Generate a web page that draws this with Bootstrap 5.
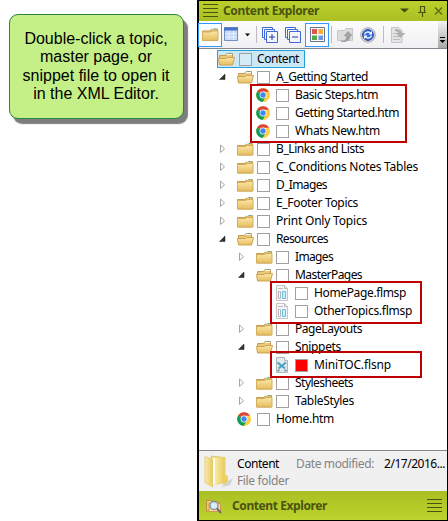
<!DOCTYPE html>
<html lang="en">
<head>
<meta charset="utf-8">
<title>Content Explorer</title>
<link href="https://cdn.jsdelivr.net/npm/bootstrap@5.3.0/dist/css/bootstrap.min.css" rel="stylesheet">
<style>
body{width:448px;height:521px;overflow:hidden;background:#fff;color:#000;font-family:"Noto Sans","Open Sans",sans-serif;font-size:12px;line-height:18px}
svg{display:block;flex:none}
.side{width:197px}
.callout{width:175px;height:105px;margin:14px 0 0 9px;background:#c5ef87;border:1px solid #2e8540;border-radius:9px;box-shadow:4px 5px 1px #7e7e7e;font:16px/18.3px "Liberation Sans",Arial,sans-serif;padding:15px 1px 0 0;white-space:nowrap}
.panel{width:251px;height:521px;border:solid #000;border-width:1px 1px 1px 2px}
.bar-top{height:20px;background:linear-gradient(#bbd02b,#aac023);color:#4a5310}
.ttl{font-weight:700;font-size:12px;white-space:nowrap}
.tools{height:27px;background:linear-gradient(#fcfcfd,#f0f0f2)}
.tbtn{width:24px;height:24px;border:1px solid transparent;flex:none}
.tbtn.on{border-color:#3399ff;background:#fafcff}
.sep{width:1px;height:17px;background:#bdbdbd;flex:none}
.grip{width:9px;height:27px;background:linear-gradient(#f2f2f2,#a9a9a9)}
.tree{height:403px;border:solid #828790;border-width:1px 0;background:#fff;padding-top:1px}
.trow{height:18px;white-space:nowrap}
.arr{width:18px;flex:none}
.ico{width:20px;flex:none}
.chk{width:13px;height:13px;border:1px solid #a0a0a0;background:#fff;flex:none;margin-right:6px}
.chk.red{background:#f00}
.l0{padding-left:18px}.l1{padding-left:20px}.l2{padding-left:39px}.l3{padding-left:58px}
.sel{height:18px;width:88px;background:#cbe8f6;border:1px solid #26a0da}
.sel .chk{background:#d5ebf5;margin-left:1px;margin-right:5px}
.mark-box{position:absolute;border:2px solid #c00000}
.stat{height:40px;background:#f0f0f0;line-height:17px;color:#838383;white-space:nowrap}
.bar-bot{height:28px;background:linear-gradient(#aabf22,#bcd42d);color:#4a5310}
</style>
<script src="https://cdn.jsdelivr.net/npm/bootstrap@5.3.0/dist/js/bootstrap.bundle.min.js"></script>
</head>
<body>
<svg width="0" height="0" class="position-absolute">
<defs>
<linearGradient id="g1" x2="0" y2="1"><stop stop-color="#fbe6a6"/><stop offset="1" stop-color="#e5bd60"/></linearGradient>
<linearGradient id="g2" x2="1" y2="0"><stop stop-color="#fbeaa0"/><stop offset="1" stop-color="#e9cb62"/></linearGradient>
<symbol id="closed" viewBox="0 0 17 14"><path d="M.5 3.500h7.500l1.500-2h6V13H.5z" fill="#e3bd68" stroke="#c69d4c"/><path d="M9.500 1.500h4" stroke="#fff"/><path d="M11.500 1.500h2" stroke="#2ba9d4"/><path d="M.5 4.500h8l1.500-1h6v9.500H.5z" fill="url(#g1)" stroke="#d5ad5e"/></symbol>
<symbol id="open" viewBox="0 0 17 14"><path d="M1.500 12.500v-9h6l1.500-2h5.500v11z" fill="#e8c778" stroke="#c69d4c"/><path d="M9 2.500h5" stroke="#fff"/><path d="M11 1.500h2" stroke="#2ba9d4"/><path d="M.5 6.500h8l1-1h7L14.500 13h-13z" fill="url(#g1)" stroke="#cda455"/></symbol>
<symbol id="chrome" viewBox="0 0 14 14"><circle cx="7" cy="7" r="6.800" fill="#ffcd42"/><path d="M7 7L1.110 3.600A6.800 6.800 0 0 1 12.890 3.600z" fill="#db4437"/><path d="M1.110 3.600A6.800 6.800 0 0 0 7 13.800L9.800 8.700 7 7z" fill="#0f9d58"/><path d="M7 3.800h6a6.800 6.800 0 0 1-6 10l3-5z" fill="#ffcd42"/><circle cx="7" cy="7" r="3.400" fill="#fff"/><circle cx="7" cy="7" r="2.700" fill="#4285f4"/></symbol>
<symbol id="master" viewBox="0 0 14 16"><path d="M1.500.5h8l3 3v12h-11z" fill="#f6f6f6" stroke="#c4c4c4"/><path d="M9.500.5v3h3M3 3.500h5" fill="none" stroke="#b9b9b9"/><path d="M3.500 6.500h2v7h-2z" fill="#fff" stroke="#b5b5b5"/><path d="M7.500 6.500h3v7h-3z" fill="#c4f0ff" stroke="#63bfe4"/></symbol>
<symbol id="snip" viewBox="0 0 14 16"><path d="M1.500.5h8l3 3v12h-11z" fill="#e0e9ec" stroke="#a9b8bd"/><path d="M9.500.5v3h3" fill="#fff" stroke="#a9b8bd"/><path d="M2.500 5.500l7.500 6M11 5.500l-7.500 6" stroke="#4a9fbe" stroke-width="1.900"/><path d="M2.500 13.500h2m5 0h2" stroke="#557f91" stroke-width="1.500"/></symbol>
<symbol id="ac" viewBox="0 0 9 10"><path d="M1.500 1v7.500L5.500 4.800z" fill="#fff" stroke="#a6a6a6"/></symbol>
<symbol id="ao" viewBox="0 0 9 10"><path d="M6 2v5.500H.5z" fill="#333" stroke="#222" stroke-width=".5"/></symbol>
<symbol id="stack" viewBox="0 0 16 16"><path d="M.5 10.500V.5h10M2.500 12.500v-10h10M10.500.5v2M.5 10.500h2M12.500 2.500v2M2.500 12.500h2M4.500 4.500h11v11h-11z" fill="none" stroke="#3f68d8"/></symbol>
</defs>
</svg>
<div class="d-flex">
<div class="side flex-shrink-0"><div class="callout text-center">Double-click a topic,<br>master page, or<br>snippet file to open it<br>in the XML Editor.</div></div>
<div class="panel d-flex flex-column position-relative">
 <div class="bar-top d-flex align-items-center">
  <svg width="15" height="14" class="ms-1"><path d="M0 .5h15M0 4.500h15M0 8.500h15M0 12.500h15" stroke="#4a5310"/></svg>
  <span class="ttl fit" data-w="96" style="margin-left:5px">Content Explorer</span>
  <svg width="44" height="14" class="ms-auto me-1"><path d="M1 4.500h9l-4.500 4z" fill="#414a10"/><path d="M21.500 2v6M25.500 2v6M21 2.500h5M19 8.500h8M23.500 8.500V13" stroke="#4a5310" stroke-width="1.200"/><path d="M36 3.500l7 7M43 3.500l-7 7" stroke="#626d18" stroke-width="1.500"/></svg>
 </div>
 <div class="tools d-flex align-items-center position-relative">
  <span class="tbtn on d-flex align-items-center justify-content-center" style="margin-left:-1px"><svg width="17" height="15"><use href="#closed"/></svg></span>
  <svg width="15" height="15" style="margin-left:2px"><path d="M.5.5h13v13H.5z" fill="#c4d8f7" stroke="#6f8fcb"/><path d="M0 2h14" stroke="#4d72c6" stroke-width="3"/><path d="M1 6.500h12M1 10h12M5 4v9M9.500 4v9" stroke="#e6effc"/></svg>
  <svg width="7" height="4" style="margin-left:5px"><path d="M1 .5h5L3.500 3.200z"/></svg>
  <span class="sep" style="margin-left:5px"></span>
  <svg width="16" height="16" style="margin-left:5px"><use href="#stack"/><path d="M7 10h6M10 7v6" stroke="#1c3fae"/></svg>
  <svg width="16" height="16" style="margin-left:7px"><use href="#stack"/><path d="M7 10h6" stroke="#1c3fae"/></svg>
  <span class="tbtn on d-flex align-items-center justify-content-center" style="margin-left:4px"><svg width="15" height="15"><path d="M.5.5h14v14H.5z" fill="#f8fafc" stroke="#64748f"/><path d="M2 2h5v5H2z" fill="#e25549"/><path d="M8.500 2H13v5H8.500z" fill="#f4ae35"/><path d="M2 8.500h5V13H2z" fill="#57a64a"/><path d="M8.500 8.500H13V13H8.500z" fill="#6d93e2"/></svg></span>
  <span class="sep" style="margin-left:2px"></span>
  <svg width="17" height="16" style="margin-left:5px"><path d="M.5 3.500h7l1.500-2h6.500v12H.5z" fill="#dcdcdc" stroke="#c6c6c6"/><path d="M4 14c5 0 5-3 5-5H6.500l4.500-5 5 5h-2.500c0 4-3 6.500-9.500 6z" fill="#a3a3a3"/></svg>
  <svg width="16" height="16" style="margin-left:6px"><circle cx="8" cy="8" r="7.300" fill="#dcdcdc" stroke="#aaa"/><circle cx="8" cy="8" r="5.400" fill="#3a6ad8" stroke="#2049a8"/><path d="M4.500 7.500a3.500 3 0 0 1 6-1.500M11.500 8.500a3.500 3 0 0 1-6 1.500" fill="none" stroke="#e9f2ff" stroke-width="1.300"/><path d="M8.500 7.500h3.500V4zM7.500 8.500H4V12z" fill="#fff"/></svg>
  <span class="sep" style="margin-left:7px"></span>
  <svg width="15" height="16" style="margin-left:7px"><path d="M.5.5h7l3.500 3v12H.5z" fill="#e4e4e4" stroke="#c4c4c4"/><path d="M2 6.500h6M2 9.500h7M2 12.500h7" stroke="#bcbcbc"/><path d="M4 2c4 0 6 1 7 4h3.500L9.500 11 5 6.500h2.500C7 5 6 4 4 4z" fill="#b0b0b0"/></svg>
  <span class="grip ms-auto d-flex align-items-end pb-1"><svg width="9" height="8"><path d="M2 1.500h5" stroke="#000"/><path d="M1.500 4h6l-3 3z"/></svg></span>
 </div>
 <div class="tree position-relative" id="tree">
  <div class="trow l0 d-flex"><div class="sel d-flex align-items-center"><span class="ico"><svg width="17" height="14"><use href="#open"/></svg></span><span class="chk"></span><span class="fit" data-w="42">Content</span></div></div>
 </div>
 <div class="stat d-flex">
  <svg width="35" height="36" style="margin:2px 0 0 4px"><path d="M20 31l10-6-3 7-8 2z" fill="#d2d2d2"/><path d="M8 3l14 1.500v25L10 32z" fill="#edd67d" stroke="#d8bf62" stroke-width=".6"/><path d="M9.500 5l5 .5V31l-5 1z" fill="#fffdf0"/><path d="M2 3.500l7.500 3V34L2 29.500z" fill="url(#g2)" stroke="#dcc15c" stroke-width=".6"/><path d="M12 6l9.500-2v24L12 32z" fill="url(#g2)"/><path d="M19 24q4-4 6 0v4l-3 3-3-1z" fill="#efd05a"/></svg>
  <div style="margin:4px 0 0 -1px"><div class="d-flex"><span class="text-black fit" data-w="42">Content</span><span class="fit" data-w="78" style="margin-left:17px">Date modified:</span><span class="text-black fit" data-w="61" style="margin-left:10px">2/17/2016...</span></div><div class="d-flex"><span class="fit" data-w="52">File folder</span></div></div>
 </div>
 <div class="bar-bot d-flex align-items-center flex-grow-1">
  <svg width="17" height="16" style="margin-left:7px"><path d="M.5 2.500h6l1 1.500h6v9H.5z" fill="#f0c777" stroke="#c58d42"/><path d="M3 5.500h11.500v8H3z" fill="#f7d695" stroke="#cf9c4e"/><circle cx="8" cy="7.500" r="4" fill="#dcedf9" stroke="#7d8b9c" stroke-width="1.300"/><path d="M11 10.500l4 4.500" stroke="#6e6e6e" stroke-width="2"/></svg>
  <span class="ttl fit" data-w="95" style="margin-left:9px">Content Explorer</span>
  <svg width="15" height="14" class="ms-auto" style="margin-right:5px"><path d="M0 .5h15M0 4.500h15M0 8.500h15M0 12.500h15" stroke="#4a5310"/></svg>
 </div>
</div>
</div>
<script>
// level, arrow, icon, label, label width
const rows=[[1,'ao','open','A_Getting Started',92],[2,'','chrome','Basic Steps.htm',83],[2,'','chrome','Getting Started.htm',104],[2,'','chrome','Whats New.htm',85],
[1,'ac','closed','B_Links and Lists',88],[1,'ac','closed','C_Conditions Notes Tables',142],[1,'ac','closed','D_Images',51],[1,'ac','closed','E_Footer Topics',82],[1,'ac','closed','Print Only Topics',91],
[1,'ao','open','Resources',52],[2,'ac','closed','Images',38],[2,'ao','open','MasterPages',67],[3,'','master','HomePage.flmsp',92],[3,'','master','OtherTopics.flmsp',98],
[2,'ac','closed','PageLayouts',67],[2,'ao','open','Snippets',46],[3,'','snip','MiniTOC.flsnp',77],[2,'ac','closed','Stylesheets',58],[2,'ac','closed','TableStyles',59],[1,'','chrome','Home.htm',58]];
const use=(id,w,h)=>`<svg width="${w}" height="${h}"><use href="#${id}"/></svg>`;
const size={open:[17,14],closed:[17,14],chrome:[14,14],master:[14,16],snip:[14,16]};
const tree=document.getElementById('tree');
for(const [lv,a,ic,t,w] of rows){
 tree.insertAdjacentHTML('beforeend',`<div class="trow d-flex align-items-center l${lv}"><span class="arr">${a?use(a,9,10):''}</span><span class="ico">${use(ic,...size[ic])}</span><span class="chk${ic=='snip'?' red':''}"></span><span class="fit" data-w="${w}">${t}</span></div>`);
}
tree.insertAdjacentHTML('beforeend','<div class="mark-box" style="left:51px;top:35px;width:157px;height:59px"></div><div class="mark-box" style="left:71px;top:232px;width:152px;height:43px"></div><div class="mark-box" style="left:71px;top:302px;width:152px;height:27px"></div>');
document.querySelectorAll('.fit').forEach(e=>{
 e.style.flex='none';
 const d=e.dataset.w-e.getBoundingClientRect().width;
 e.style.letterSpacing=(d/e.textContent.length)+'px';
});
</script>
</body>
</html>
